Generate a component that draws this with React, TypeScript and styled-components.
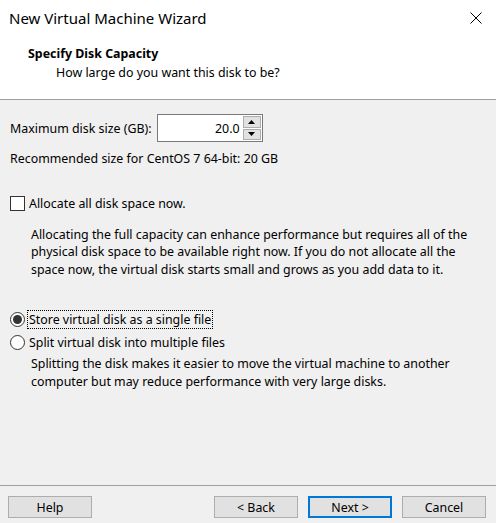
import styled, { createGlobalStyle } from 'styled-components';

const GlobalStyle = createGlobalStyle`
  html, body {
    margin: 0;
    padding: 0;
    background: #f0f0f0;
  }
  body {
    font-family: 'Noto Sans', 'Liberation Sans', sans-serif;
    font-size: 12.4px;
    color: #000;
  }
`;

const Window = styled.div`
  width: 496px;
  height: 523px;
  display: flex;
  flex-direction: column;
  background: #f0f0f0;
  overflow: hidden;
`;

const TitleBar = styled.div`
  height: 36px;
  display: flex;
  align-items: center;
  justify-content: space-between;
  padding: 0 0 0 9px;
  background: #fff;
  font-size: 15px;
`;

const CloseButton = styled.div`
  width: 40px;
  height: 36px;
  display: flex;
  align-items: center;
  justify-content: center;
`;

const Header = styled.div`
  background: #fff;
  height: 64px;
  padding: 9px 0 0 28px;
  box-sizing: border-box;
  border-bottom: 1px solid #a0a0a0;
  .title {
    font-weight: bold;
  }
  .subtitle {
    margin: 2px 0 0 28px;
  }
`;

const Body = styled.div`
  flex: 1;
  padding: 14px 0 0 10px;
  display: flex;
  flex-direction: column;
`;

const FieldRow = styled.div`
  display: flex;
  align-items: center;
  gap: 5px;
`;

const SpinBox = styled.div`
  width: 106px;
  height: 28px;
  box-sizing: border-box;
  border: 1px solid #7a7a7a;
  background: #fff;
  display: flex;
  align-items: center;
  .value {
    flex: 1;
    text-align: right;
    padding-right: 3px;
  }
`;

const SpinButtons = styled.div`
  width: 18px;
  height: 24px;
  margin-right: 1px;
  display: flex;
  flex-direction: column;
  gap: 1px;
`;

const SpinButton = styled.div`
  flex: 1;
  background: #e1e1e1;
  border: 1px solid #adadad;
  display: flex;
  align-items: center;
  justify-content: center;
`;

const Note = styled.div<{ $top?: number }>`
  margin-top: ${(p) => p.$top ?? 0}px;
  line-height: 17.5px;
`;

const Option = styled.div<{ $top?: number }>`
  display: flex;
  align-items: center;
  gap: 3px;
  margin-top: ${(p) => p.$top ?? 0}px;
  height: 18px;
`;

const Check = styled.div`
  width: 15px;
  height: 15px;
  box-sizing: border-box;
  border: 1px solid #333;
  background: #fff;
`;

const Radio = styled.div<{ $checked?: boolean }>`
  width: 15px;
  height: 15px;
  box-sizing: border-box;
  border-radius: 50%;
  border: 1px solid #333;
  background: #fff;
  display: flex;
  align-items: center;
  justify-content: center;
  &::after {
    content: '';
    display: ${(p) => (p.$checked ? 'block' : 'none')};
    width: 9px;
    height: 9px;
    border-radius: 50%;
    background: #333;
  }
`;

const Label = styled.span<{ $focused?: boolean }>`
  outline: ${(p) => (p.$focused ? '1px dotted #000' : 'none')};
  padding: 0 1px;
`;

const Paragraph = styled.div<{ $top?: number }>`
  margin: ${(p) => p.$top ?? 0}px 0 0 21px;
  line-height: 17.5px;
  white-space: nowrap;
  span {
    display: block;
  }
`;

const Footer = styled.div`
  border-top: 1px solid #a0a0a0;
  height: 38px;
  box-sizing: border-box;
  display: flex;
  align-items: flex-start;
  padding: 10px 10px 0 8px;
`;

const Button = styled.div<{ $default?: boolean }>`
  width: 84px;
  height: 22px;
  box-sizing: border-box;
  background: #e1e1e1;
  border: ${(p) => (p.$default ? '2px solid #0078d7' : '1px solid #adadad')};
  display: flex;
  align-items: center;
  justify-content: center;
  margin-left: 10px;
  &:first-child {
    margin-left: 0;
    margin-right: auto;
  }
`;

const App = () => {
  return (
    <>
      <GlobalStyle />
      <Window>
        <TitleBar>
          <span>New Virtual Machine Wizard</span>
          <CloseButton>
            <svg width="12" height="12" viewBox="0 0 12 12">
              <path d="M0.5 0.5 L11.5 11.5 M11.5 0.5 L0.5 11.5" stroke="#000" strokeWidth="1" />
            </svg>
          </CloseButton>
        </TitleBar>
        <Header>
          <div className="title">Specify Disk Capacity</div>
          <div className="subtitle">How large do you want this disk to be?</div>
        </Header>
        <Body>
          <FieldRow>
            <span>Maximum disk size (GB):</span>
            <SpinBox>
              <span className="value">20.0</span>
              <SpinButtons>
                <SpinButton>
                  <svg width="7" height="4" viewBox="0 0 7 4">
                    <path d="M3.5 0 L7 4 L0 4 Z" fill="#000" />
                  </svg>
                </SpinButton>
                <SpinButton>
                  <svg width="7" height="4" viewBox="0 0 7 4">
                    <path d="M0 0 L7 0 L3.5 4 Z" fill="#000" />
                  </svg>
                </SpinButton>
              </SpinButtons>
            </SpinBox>
          </FieldRow>
          <Note $top={8}>Recommended size for CentOS 7 64-bit: 20 GB</Note>
          <Option $top={27}>
            <Check />
            <Label>Allocate all disk space now.</Label>
          </Option>
          <Paragraph $top={13}>
            <span>Allocating the full capacity can enhance performance but requires all of the</span>
            <span>physical disk space to be available right now. If you do not allocate all the</span>
            <span>space now, the virtual disk starts small and grows as you add data to it.</span>
          </Paragraph>
          <Option $top={32}>
            <Radio $checked />
            <Label $focused>Store virtual disk as a single file</Label>
          </Option>
          <Option $top={5}>
            <Radio />
            <Label>Split virtual disk into multiple files</Label>
          </Option>
          <Paragraph $top={4}>
            <span>Splitting the disk makes it easier to move the virtual machine to another</span>
            <span>computer but may reduce performance with very large disks.</span>
          </Paragraph>
        </Body>
        <Footer>
          <Button>Help</Button>
          <Button>&lt; Back</Button>
          <Button $default>Next &gt;</Button>
          <Button>Cancel</Button>
        </Footer>
      </Window>
    </>
  );
};

export default App;
